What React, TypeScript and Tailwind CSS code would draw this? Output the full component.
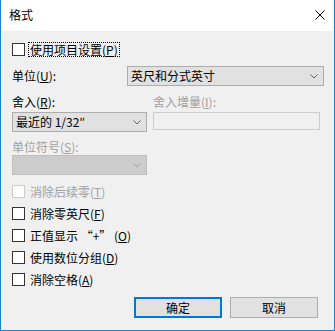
import React from "react";

const font = { fontFamily: '"Noto Sans CJK SC", "Liberation Sans", sans-serif' };

const Key = (props: { k: string }) => <span className="underline underline-offset-1">{props.k}</span>;

const Chevron = (props: { muted?: boolean }) => (
  <svg width="8" height="5" viewBox="0 0 8 5" className="shrink-0">
    <path d="M0.5 0.5 L4 4 L7.5 0.5" fill="none" stroke={props.muted ? "#a0a0a0" : "#606060"} strokeWidth="1" />
  </svg>
);

const Check = (props: { label: React.ReactNode; disabled?: boolean; focus?: boolean }) => (
  <div className="flex items-center h-[15px]">
    <div
      className={
        "w-[13px] h-[13px] border bg-white " + (props.disabled ? "border-[#cccccc]" : "border-[#333333]")
      }
    />
    <span
      className={
        "ml-[3px] text-[12px] leading-[13px] px-[1px] " +
        (props.disabled ? "text-[#a0a0a0]" : "text-black") +
        (props.focus ? " border border-dotted border-black" : " border border-transparent")
      }
    >
      {props.label}
    </span>
  </div>
);

export default function App() {
  return (
    <div
      className="w-[335px] h-[331px] flex flex-col border-l border-r border-b border-[#1883d7] bg-[#f0f0f0] overflow-hidden"
      style={font}
    >
      <div className="h-[31px] bg-white flex items-center justify-between pl-[8px] pr-[9px] shrink-0">
        <span className="text-[12px] text-black -mt-[1px]">格式</span>
        <svg width="10" height="10" viewBox="0 0 10 10" className="-mt-[2px]">
          <path d="M0.5 0.5 L9.5 9.5 M9.5 0.5 L0.5 9.5" stroke="#000" strokeWidth="1" />
        </svg>
      </div>

      <div className="flex flex-col pl-[11px] pr-[10px]">
        <div className="mt-[11px]">
          <Check
            focus
            label={
              <>
                使用项目设置(<Key k="P" />)
              </>
            }
          />
        </div>

        <div className="mt-[9px] flex items-center h-[20px]">
          <span className="w-[115px] text-[12px] text-black">
            单位(<Key k="U" />):
          </span>
          <div className="flex-1 h-[20px] bg-[#e1e1e1] border border-[#adadad] flex items-center justify-between pl-[3px] pr-[5px]">
            <span className="text-[12px] text-black">英尺和分式英寸</span>
            <Chevron />
          </div>
        </div>

        <div className="mt-[9px] flex h-[14px] items-center text-[12px]">
          <span className="w-[141px] text-black">
            舍入(<Key k="R" />):
          </span>
          <span className="text-[#a0a0a0]">
            舍入增量(<Key k="I" />):
          </span>
        </div>

        <div className="mt-[3px] flex items-start">
          <div className="w-[135px] h-[20px] bg-[#e1e1e1] border border-[#adadad] flex items-center justify-between pl-[3px] pr-[5px]">
            <span className="text-[12px] text-black">最近的 1/32″</span>
            <Chevron />
          </div>
          <div className="ml-[6px] w-[167px] h-[18px] border border-[#cccccc] bg-[#f0f0f0]" />
        </div>

        <div className="mt-[8px] h-[14px] flex items-center text-[12px] text-[#a0a0a0]">
          单位符号(<Key k="S" />):
        </div>

        <div className="mt-[1px] w-[135px] h-[20px] bg-[#cccccc] border border-[#bfbfbf] flex items-center justify-end pr-[5px]">
          <Chevron muted />
        </div>

        <div className="mt-[9px] flex flex-col gap-[7px]">
          <Check
            disabled
            label={
              <>
                消除后续零(<Key k="T" />)
              </>
            }
          />
          <Check
            label={
              <>
                消除零英尺(<Key k="F" />)
              </>
            }
          />
          <Check
            label={
              <>
                正值显示 “+” (<Key k="O" />)
              </>
            }
          />
          <Check
            label={
              <>
                使用数位分组(<Key k="D" />)
              </>
            }
          />
          <Check
            label={
              <>
                消除空格(<Key k="A" />)
              </>
            }
          />
        </div>

        <div className="mt-[10px] flex justify-end gap-[8px] pr-[6px]">
          <button className="w-[88px] h-[21px] bg-[#e1e1e1] border-2 border-[#0078d7] text-[12px] text-black flex items-center justify-center">
            确定
          </button>
          <button className="w-[88px] h-[21px] bg-[#e1e1e1] border border-[#adadad] text-[12px] text-black flex items-center justify-center">
            取消
          </button>
        </div>
      </div>
    </div>
  );
}
